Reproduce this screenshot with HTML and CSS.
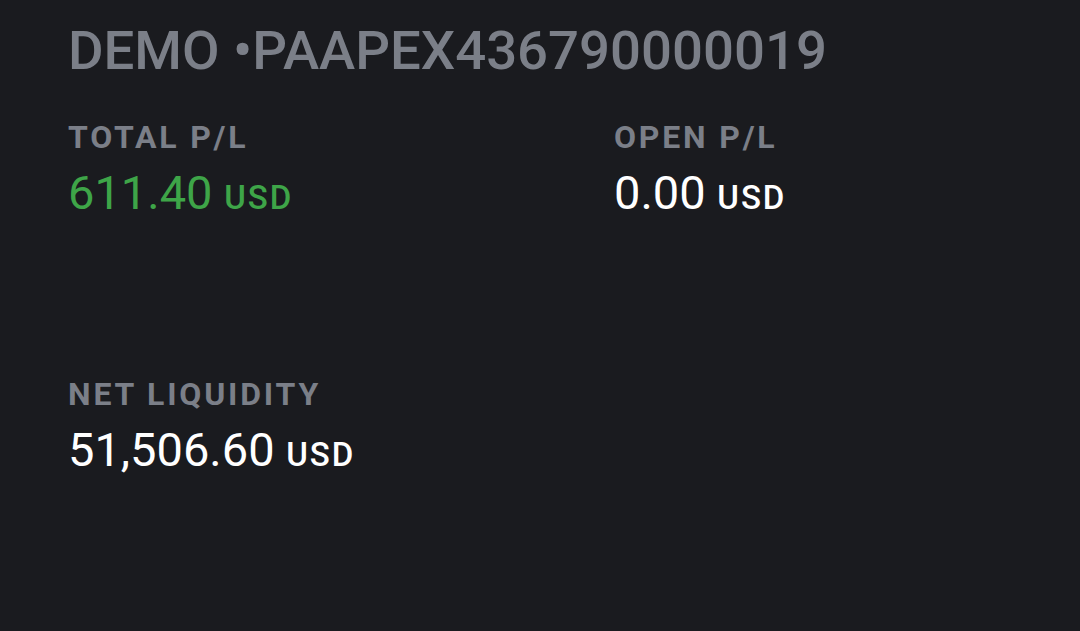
FILE: index.html
```html
<!doctype html>
<html>
  <head>
    <meta charset="UTF-8" />
    <title>Account</title>
    <link rel="stylesheet" href="styles.css">
  </head>
  <body>
    <div class="account">
      <h1 class="account-id">DEMO •PAAPEX436790000019</h1>
      <div class="stats">
        <div class="stat">
          <div class="label">TOTAL P/L</div>
          <div class="value gain">611.40 <span class="ccy">USD</span></div>
        </div>
        <div class="stat">
          <div class="label">OPEN P/L</div>
          <div class="value">0.00 <span class="ccy">USD</span></div>
        </div>
        <div class="stat wide">
          <div class="label">NET LIQUIDITY</div>
          <div class="value">51,506.60 <span class="ccy">USD</span></div>
        </div>
      </div>
    </div>
  </body>
</html>
```

FILE: styles.css
```css
html, body {
  margin: 0;
  height: 100%;
  background: #1a1b1f;
  font-family: Roboto, "Liberation Sans", sans-serif;
}
.account {
  padding: 18px 0 0 68px;
}
.account-id {
  margin: 0;
  font-size: 54.5px;
  font-weight: 500;
  line-height: 64px;
  color: #7b7f88;
}
.stats {
  display: grid;
  grid-template-columns: 546px 1fr;
  row-gap: 150px;
  margin-top: 36px;
}
.wide {
  grid-column: 1 / 3;
}
.label {
  font-size: 32px;
  font-weight: 700;
  letter-spacing: 2.8px;
  color: #7b7f88;
  line-height: 38px;
}
.value {
  margin-top: 10px;
  font-size: 47px;
  line-height: 54px;
  color: #fff;
}
.value.gain {
  color: #3ea548;
}
.ccy {
  font-size: 33px;
  font-weight: 500;
  letter-spacing: 2px;
}
```
